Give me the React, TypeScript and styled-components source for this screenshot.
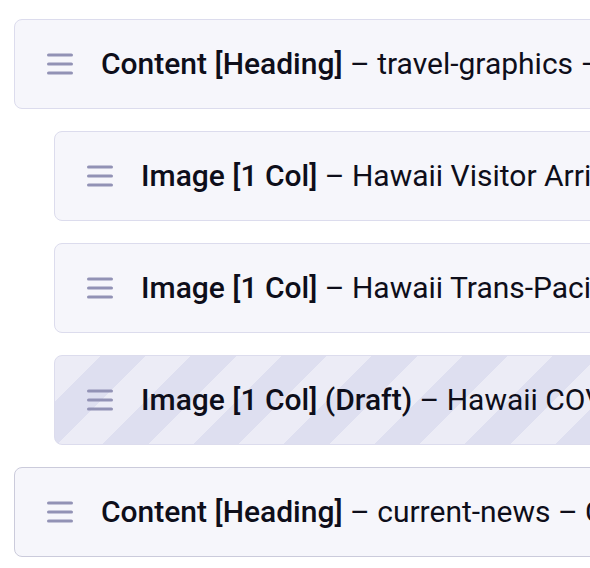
import React from "react";
import styled, { createGlobalStyle } from "styled-components";

const GlobalStyle = createGlobalStyle`
  html, body {
    margin: 0;
    padding: 0;
    background: #ffffff;
    overflow: hidden;
  }
`;

const Page = styled.div`
  display: flex;
  flex-direction: column;
  gap: 22px;
  padding: 19px 0 0 14px;
  width: 1400px;
  font-family: Roboto, "Liberation Sans", sans-serif;
  color: #0e0e1a;
`;

const Row = styled.div<{ $depth: number; $draft?: boolean; $active?: boolean }>`
  display: flex;
  align-items: center;
  gap: 28px;
  box-sizing: border-box;
  height: 90px;
  margin-left: ${(p) => p.$depth * 40}px;
  padding-left: 32px;
  border: 1px solid ${(p) => (p.$active ? "#cbcbdb" : "#dcdced")};
  border-radius: 8px;
  background: ${(p) =>
    p.$draft
      ? "repeating-linear-gradient(135deg, #ececf6 0px, #ececf6 32px, #dedff0 32px, #dedff0 64px)"
      : "#f6f6fb"};
  white-space: nowrap;
`;

const Handle = styled.svg`
  flex: none;
  width: 26px;
  height: 22px;
`;

const Label = styled.span`
  font-size: 30px;
  line-height: 34px;
`;

const Name = styled.span`
  font-weight: 500;
`;

const items = [
  { depth: 0, name: "Content [Heading]", rest: "travel-graphics – Travel Graphics" },
  { depth: 1, name: "Image [1 Col]", rest: "Hawaii Visitor Arrivals" },
  { depth: 1, name: "Image [1 Col]", rest: "Hawaii Trans-Pacific Air Seats" },
  { depth: 1, name: "Image [1 Col] (Draft)", rest: "Hawaii COVID-19 Cases", draft: true },
  { depth: 0, name: "Content [Heading]", rest: "current-news – Current News", active: true },
];

const DragIcon = () => (
  <Handle viewBox="0 0 26 22">
    <g stroke="#9292b5" strokeWidth="3.2" strokeLinecap="round">
      <line x1="1.6" y1="2" x2="24.4" y2="2" />
      <line x1="1.6" y1="11" x2="24.4" y2="11" />
      <line x1="1.6" y1="20" x2="24.4" y2="20" />
    </g>
  </Handle>
);

export default function App() {
  return (
    <>
      <GlobalStyle />
      <Page>
        {items.map((item, i) => (
          <Row key={i} $depth={item.depth} $draft={item.draft} $active={item.active}>
            <DragIcon />
            <Label>
              <Name>{item.name}</Name> – {item.rest}
            </Label>
          </Row>
        ))}
      </Page>
    </>
  );
}
